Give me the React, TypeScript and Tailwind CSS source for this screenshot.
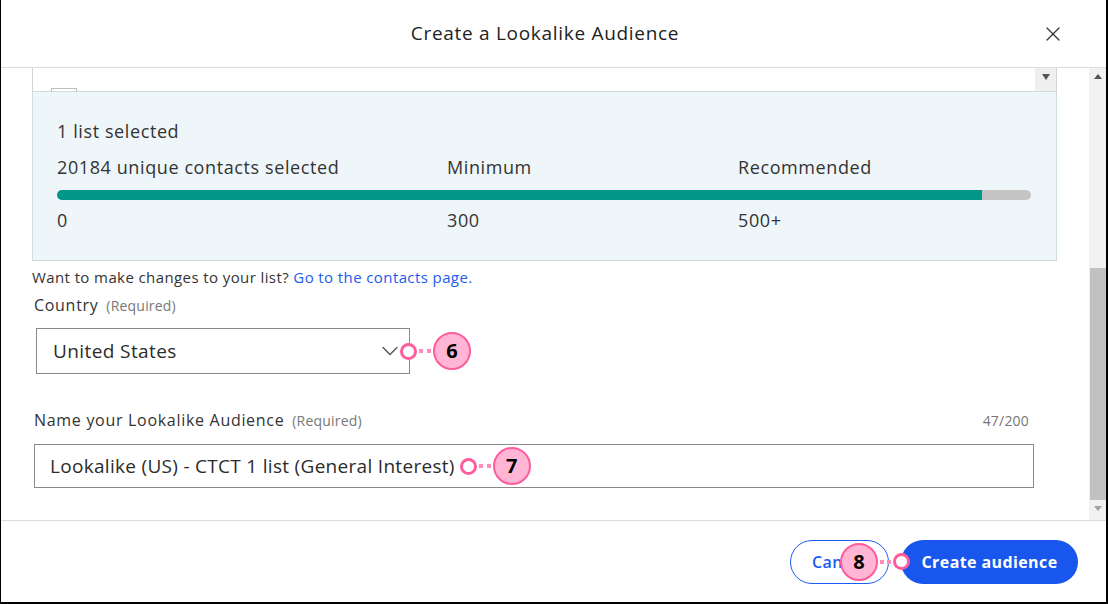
import { X, ChevronDown } from 'lucide-react'

const FONT = { fontFamily: '"Open Sans", "Noto Sans", sans-serif' }

const Ring = () => (
  <span className="block h-[17px] w-[17px] shrink-0 rounded-full border-[3px] border-[#ff5c9d] bg-white" />
)

const Dots = () => (
  <span className="mx-[2px] flex gap-[4px]">
    <span className="block h-[4px] w-[4px] bg-[#ff8cbb]" />
    <span className="block h-[4px] w-[4px] bg-[#ff8cbb]" />
  </span>
)

const Badge: React.FC<{ n: string }> = ({ n }) => (
  <span className="flex h-[38px] w-[38px] shrink-0 items-center justify-center rounded-full border-[2px] border-[#ff5c9d] bg-[#ffb5d3] text-[20px] font-bold leading-none tracking-normal text-black">
    {n}
  </span>
)

export default function App() {
  return (
    <div
      className="flex h-[604px] w-[1108px] flex-col overflow-hidden border-b-2 border-l border-r-2 border-black bg-white text-[#2b2b2b]"
      style={FONT}
    >
      {/* header */}
      <div className="relative flex h-[68px] shrink-0 items-center justify-center border-b border-[#dcdcdc] pr-[17px]">
        <h1 className="text-[19px] font-medium tracking-[0.7px] text-[#222]">Create a Lookalike Audience</h1>
        <X className="absolute right-[41px] top-[22px] h-[24px] w-[24px] text-[#333]" strokeWidth={1.3} />
      </div>

      {/* body */}
      <div className="flex h-[452px] shrink-0">
        <div className="relative flex-1 overflow-hidden pl-[31px] pr-[32px]">
          <div className="relative flex h-[23px] border-x border-[#d4d4d4] bg-white">
            <span className="absolute left-[18px] top-[20px] block h-[4px] w-[26px] border-x border-t border-[#bdbdbd]" />
            <div className="ml-auto flex w-[21px] items-start justify-center bg-[#efefef] pt-[6px]">
              <span className="block h-0 w-0 border-x-[4px] border-t-[6px] border-x-transparent border-t-[#555]" />
            </div>
          </div>
          <div className="border border-[#cfdde0] bg-[#eef6f9] pb-[28px] pl-[24px] pr-[25px] pt-[27px] text-[18px] tracking-[0.6px] text-[#333]">
            <p className="leading-[24px]">1 list selected</p>
            <div className="mt-[12px] flex leading-[24px]">
              <span className="w-[390px]">20184 unique contacts selected</span>
              <span className="w-[291px]">Minimum</span>
              <span>Recommended</span>
            </div>
            <div className="mt-[11px] h-[10px] w-full overflow-hidden rounded-full bg-[#c4c4c4]">
              <div className="h-full bg-[#009688]" style={{ width: '95%' }} />
            </div>
            <div className="mt-[8px] flex leading-[24px]">
              <span className="w-[390px]">0</span>
              <span className="w-[291px]">300</span>
              <span>500+</span>
            </div>
          </div>
          <p className="mt-[6px] text-[15px] leading-[20px] tracking-[0.4px] text-[#333]">
            Want to make changes to your list?{' '}
            <span className="text-[#1b5cf2]">Go to the contacts page.</span>
          </p>

          <div className="mt-[7px] pl-[2px] text-[16px] leading-[22px] tracking-[0.7px] text-[#333]">
            Country <span className="ml-[3px] text-[14px] tracking-[0.2px] text-[#777]">(Required)</span>
          </div>
          <div className="relative ml-[4px] mt-[11px] flex h-[46px] w-[374px] items-center border border-[#8a8a8a] pl-[16px] pr-[5px] text-[19px] tracking-[0.4px]">
            <span>United States</span>
            <ChevronDown className="ml-auto h-[28px] w-[28px] text-[#555]" strokeWidth={1.2} />
            <div className="absolute left-[363px] top-[3px] flex items-center">
              <Ring />
              <Dots />
              <Badge n="6" />
            </div>
          </div>

          <div className="mt-[35px] flex items-center pl-[2px] pr-[28px] text-[16px] leading-[22px] tracking-[0.7px] text-[#333]">
            <span>
              Name your Lookalike Audience{' '}
              <span className="ml-[3px] text-[14px] tracking-[0.2px] text-[#777]">(Required)</span>
            </span>
            <span className="ml-auto text-[14px] tracking-[0.2px] text-[#777]">47/200</span>
          </div>
          <div className="ml-[2px] mt-[12px] flex h-[44px] w-[1000px] items-center border border-[#8a8a8a] pl-[15px] text-[19px] tracking-[0.3px]">
            <span>Lookalike (US) - CTCT 1 list (General Interest)</span>
            <span className="ml-[5px] flex items-center">
              <Ring />
              <Dots />
              <Badge n="7" />
            </span>
          </div>
        </div>

        {/* scrollbar */}
        <div className="flex w-[17px] flex-col items-center bg-[#f1f1f1]">
          <div className="flex h-[17px] items-center justify-center">
            <span className="block h-0 w-0 border-x-[4px] border-b-[5px] border-x-transparent border-b-[#555]" />
          </div>
          <div className="mt-[183px] h-[232px] w-[16px] bg-[#c1c1c1]" />
          <div className="flex h-[17px] items-center justify-center">
            <span className="block h-0 w-0 border-x-[4px] border-t-[5px] border-x-transparent border-t-[#a3a3a3]" />
          </div>
        </div>
      </div>

      {/* footer */}
      <div className="flex flex-1 items-center justify-end border-t border-[#dcdcdc] pr-[28px]">
        <div className="relative flex items-center gap-[12px]">
          <button className="h-[44px] w-[99px] rounded-full border border-[#1b5cf2] pl-[21px] text-left text-[16px] font-semibold tracking-[0.4px] text-[#1b5cf2]">
            Can
          </button>
          <button className="h-[44px] w-[177px] rounded-full bg-[#1856ed] text-[16px] font-bold tracking-[0.4px] text-white">
            Create audience
          </button>
          <div className="absolute left-[50px] top-[3px] flex items-center">
            <Badge n="8" />
            <span className="mx-[2px] flex gap-[3px]">
              <span className="block h-[4px] w-[4px] bg-[#ff8cbb]" />
              <span className="block h-[4px] w-[4px] bg-[#ff8cbb]" />
            </span>
            <Ring />
          </div>
        </div>
      </div>
    </div>
  )
}
